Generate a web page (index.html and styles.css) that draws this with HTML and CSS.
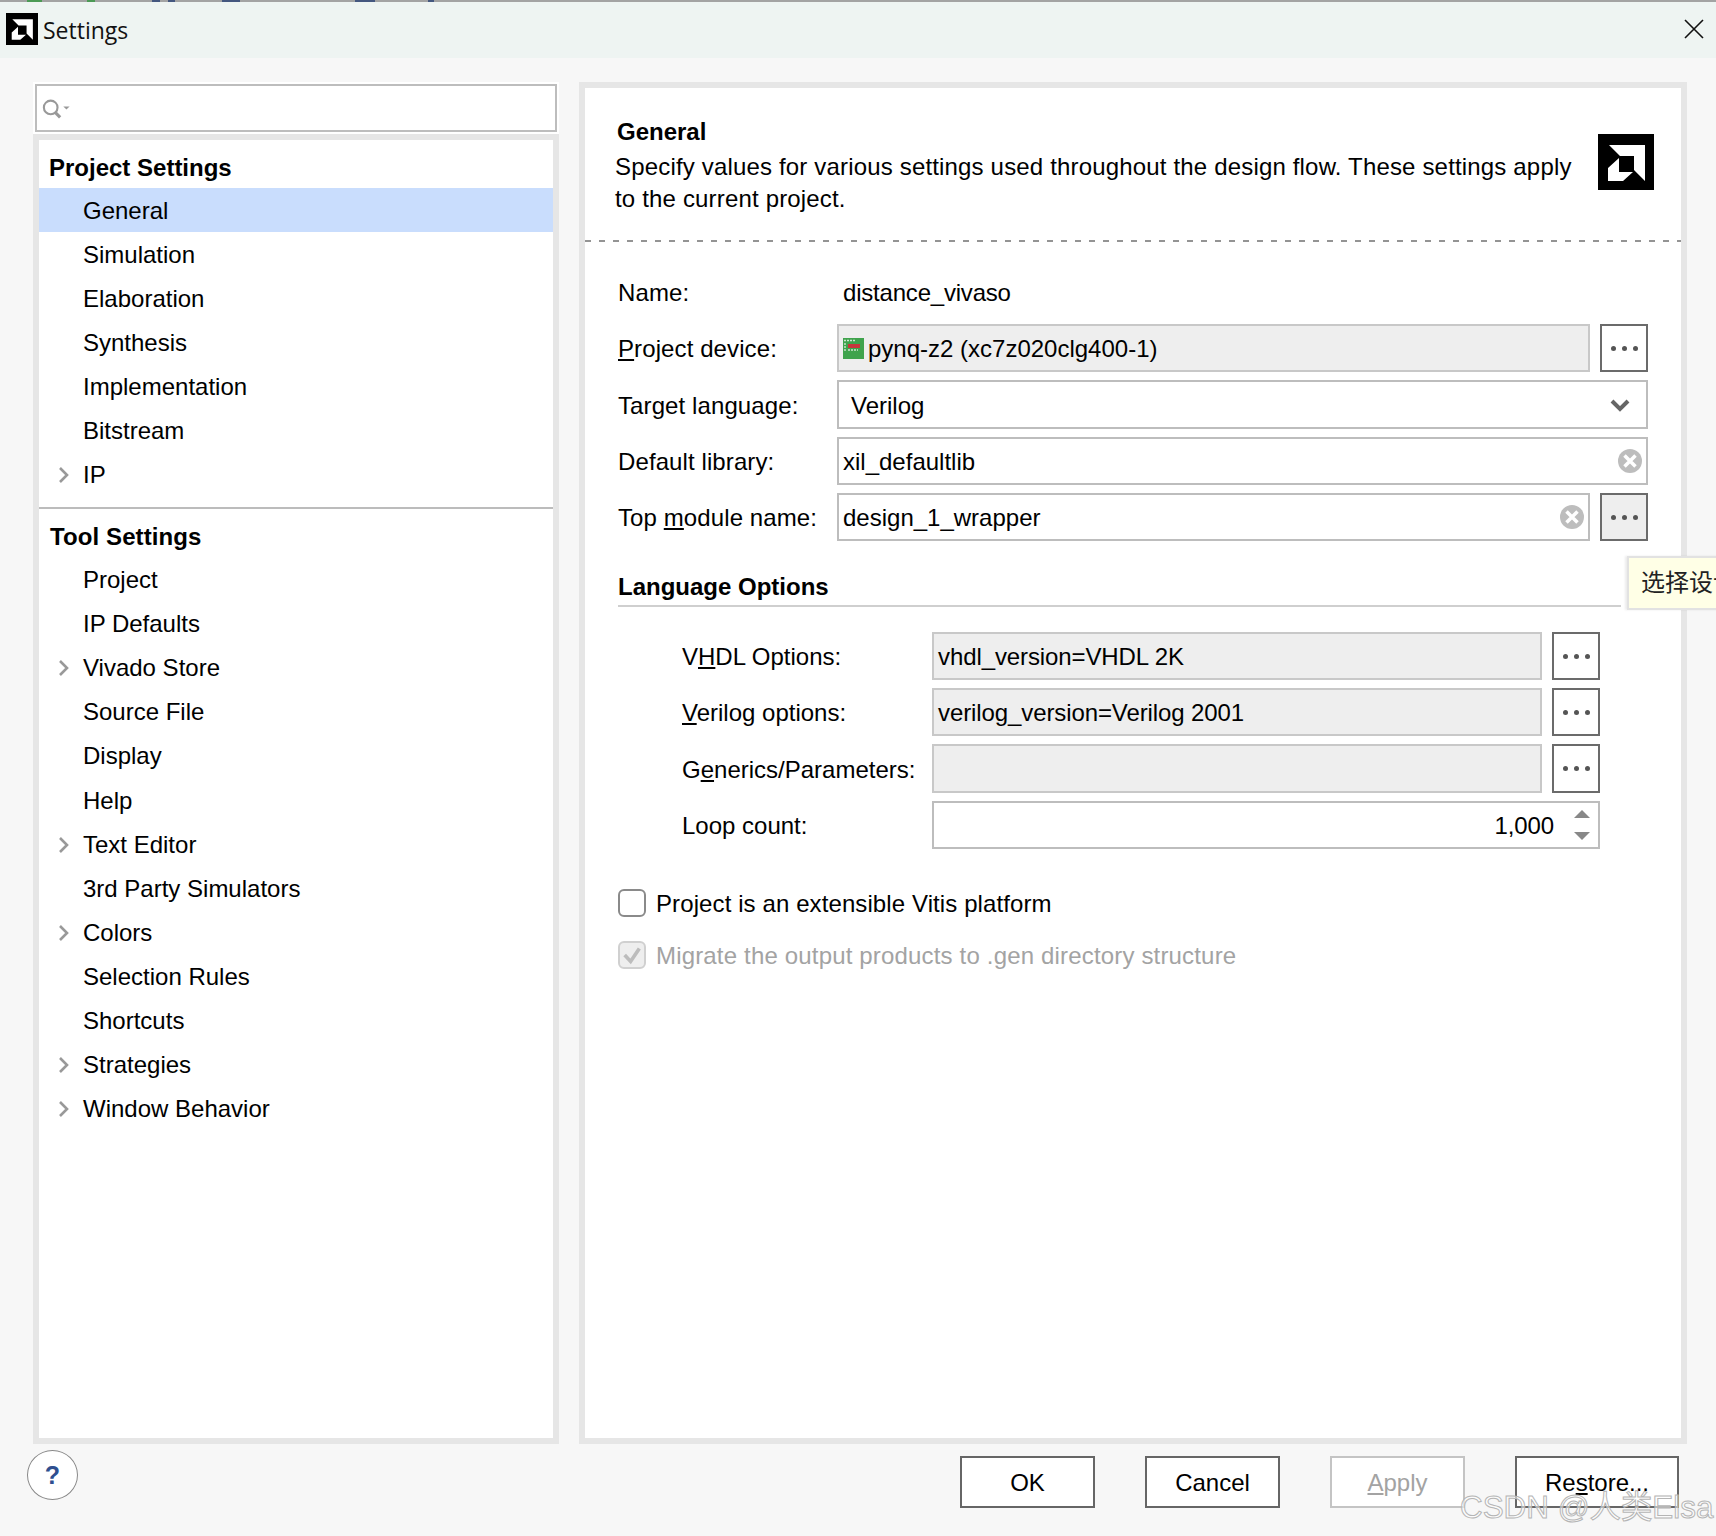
FILE: index.html
```html
<!DOCTYPE html>
<html lang="en">
<head>
<meta charset="utf-8">
<title>Settings</title>
<link rel="stylesheet" href="styles.css">
</head>
<body>
<div class="app">
  <div class="strip"></div>
  <header class="titlebar">
    <svg class="logo-small" viewBox="0 0 56 56"><rect width="56" height="56" fill="#000"/><path fill="#fff" d="M11 11H47V47L36 36V22H22Z M21 24V38H35L25 47H10V34Z"/></svg>
    <span class="window-title">Settings</span>
    <svg class="close" viewBox="0 0 20 20"><path d="M1 1L19 19M19 1L1 19" stroke="#111" stroke-width="1.6" fill="none"/></svg>
  </header>

  <main class="content">
    <aside class="sidebar">
      <div class="search-wrap">
        <div class="search">
          <svg class="search-icon" viewBox="0 0 28 20"><circle cx="8" cy="9" r="6.500" fill="none" stroke="#999" stroke-width="2"/><path d="M12.500 14L17 18.500" stroke="#999" stroke-width="3"/><path d="M20 8h6l-3 3z" fill="#999"/></svg>
        </div>
      </div>
      <nav class="tree">
        <div class="group-title">Project Settings</div>
        <div class="item selected">General</div>
        <div class="item">Simulation</div>
        <div class="item">Elaboration</div>
        <div class="item">Synthesis</div>
        <div class="item">Implementation</div>
        <div class="item">Bitstream</div>
        <div class="item"><svg class="chev" viewBox="0 0 10 16"><path d="M1 1L8 8L1 15" fill="none" stroke="#999" stroke-width="2.600"/></svg>IP</div>
        <div class="tree-rule"></div>
        <div class="group-title tool-title">Tool Settings</div>
        <div class="tool-list">
          <div class="item">Project</div>
          <div class="item">IP Defaults</div>
          <div class="item"><svg class="chev" viewBox="0 0 10 16"><path d="M1 1L8 8L1 15" fill="none" stroke="#999" stroke-width="2.600"/></svg>Vivado Store</div>
          <div class="item">Source File</div>
          <div class="item">Display</div>
          <div class="item">Help</div>
          <div class="item"><svg class="chev" viewBox="0 0 10 16"><path d="M1 1L8 8L1 15" fill="none" stroke="#999" stroke-width="2.600"/></svg>Text Editor</div>
          <div class="item">3rd Party Simulators</div>
          <div class="item"><svg class="chev" viewBox="0 0 10 16"><path d="M1 1L8 8L1 15" fill="none" stroke="#999" stroke-width="2.600"/></svg>Colors</div>
          <div class="item">Selection Rules</div>
          <div class="item">Shortcuts</div>
          <div class="item"><svg class="chev" viewBox="0 0 10 16"><path d="M1 1L8 8L1 15" fill="none" stroke="#999" stroke-width="2.600"/></svg>Strategies</div>
          <div class="item"><svg class="chev" viewBox="0 0 10 16"><path d="M1 1L8 8L1 15" fill="none" stroke="#999" stroke-width="2.600"/></svg>Window Behavior</div>
        </div>
      </nav>
    </aside>

    <section class="panel">
      <div class="panel-head">
        <div class="head-text">
          <div class="head-title">General</div>
          <p class="head-desc">Specify values for various settings used throughout the design flow. These settings apply to the current project.</p>
        </div>
        <svg class="logo-large" viewBox="0 0 56 56"><rect width="56" height="56" fill="#000"/><path fill="#fff" d="M11 11H47V47L36 36V22H22Z M21 24V38H35L25 47H10V34Z"/></svg>
      </div>
      <div class="dashed"></div>

      <div class="form">
        <div class="row">
          <span class="label">Name:</span>
          <span class="plain-value">distance_vivaso</span>
        </div>
        <div class="row">
          <span class="label"><u>P</u>roject device:</span>
          <div class="field readonly">
            <svg class="chip" viewBox="0 0 21 21"><rect width="21" height="21" fill="#3fa34d"/><rect x="5" y="6" width="12" height="4" fill="#c9363c"/><path d="M1 2.500h11M2 5v9M5 12h10" stroke="#cfe3cf" stroke-width="1.400" stroke-dasharray="2 1" fill="none"/></svg>
            <span class="val">pynq-z2 (xc7z020clg400-1)</span>
          </div>
          <button class="more"><i></i><i></i><i></i></button>
        </div>
        <div class="row tall">
          <span class="label">Target language:</span>
          <div class="field select">
            <span class="val">Verilog</span>
            <svg class="caret" viewBox="0 0 20 13"><path d="M2 2L10 10L18 2" fill="none" stroke="#666" stroke-width="4"/></svg>
          </div>
        </div>
        <div class="row">
          <span class="label">Default library:</span>
          <div class="field">
            <span class="val">xil_defaultlib</span>
            <svg class="clear" viewBox="0 0 24 24"><circle cx="12" cy="12" r="12" fill="#bdbdbd"/><path d="M6.500 6.500L17.500 17.500M17.500 6.500L6.500 17.500" stroke="#fff" stroke-width="3.500"/></svg>
          </div>
        </div>
        <div class="row">
          <span class="label">Top <u>m</u>odule name:</span>
          <div class="field">
            <span class="val">design_1_wrapper</span>
            <svg class="clear" viewBox="0 0 24 24"><circle cx="12" cy="12" r="12" fill="#bdbdbd"/><path d="M6.500 6.500L17.500 17.500M17.500 6.500L6.500 17.500" stroke="#fff" stroke-width="3.500"/></svg>
          </div>
          <button class="more hover"><i></i><i></i><i></i></button>
        </div>
      </div>

      <h3 class="section-title">Language Options</h3>

      <div class="lang">
        <div class="row">
          <span class="label wide">V<u>H</u>DL Options:</span>
          <div class="field readonly"><span class="val tight">vhdl_version=VHDL 2K</span></div>
          <button class="more"><i></i><i></i><i></i></button>
        </div>
        <div class="row">
          <span class="label wide"><u>V</u>erilog options:</span>
          <div class="field readonly"><span class="val tight">verilog_version=Verilog 2001</span></div>
          <button class="more"><i></i><i></i><i></i></button>
        </div>
        <div class="row tall">
          <span class="label wide">G<u>e</u>nerics/Parameters:</span>
          <div class="field readonly"></div>
          <button class="more"><i></i><i></i><i></i></button>
        </div>
        <div class="row">
          <span class="label wide">Loop count:</span>
          <div class="field spinner">
            <span class="val tight">1,000</span>
            <div class="spin">
              <svg viewBox="0 0 16 8"><path d="M0 8L8 0L16 8Z" fill="#888"/></svg>
              <svg viewBox="0 0 16 8"><path d="M0 0L8 8L16 0Z" fill="#888"/></svg>
            </div>
          </div>
        </div>
      </div>

      <div class="checks">
        <div class="check-row">
          <span class="box"></span>
          <span class="val">Project is an extensible Vitis platform</span>
        </div>
        <div class="check-row disabled">
          <span class="box checked"><svg viewBox="0 0 24 24"><path d="M4 12L10.500 19L20 5" fill="none" stroke="#bcbcbc" stroke-width="4"/></svg></span>
          <span class="val">Migrate the output products to .gen directory structure</span>
        </div>
      </div>

      <div class="tooltip">选择设计</div>
    </section>
  </main>

  <footer class="footer">
    <button class="help">?</button>
    <div class="actions">
      <button class="btn">OK</button>
      <button class="btn">Cancel</button>
      <button class="btn apply"><u>A</u>pply</button>
      <button class="btn restore">Re<u>s</u>tore...</button>
    </div>
  </footer>
  <div class="watermark">CSDN @人类Elsa</div>
</div>
</body>
</html>
```

FILE: styles.css
```css
* { box-sizing: border-box; }
html, body { margin: 0; padding: 0; }
body { font-family: "Liberation Sans", Arial, "Noto Sans CJK SC", sans-serif; font-size: 24px; color: #000; background: #f7f7f7; }

.app { position: relative; width: 1716px; height: 1536px; overflow: hidden; display: flex; flex-direction: column; background: #f7f7f7; }

.strip {
  height: 2px; flex: none;
  background:
    linear-gradient(90deg, transparent 27px, #4c9a55 27px, #4c9a55 42px, transparent 42px, transparent 87px, #4c9a55 87px, #4c9a55 95px, transparent 95px,
      transparent 152px, #44577f 152px, #44577f 160px, transparent 160px, transparent 168px, #44577f 168px, #44577f 175px, transparent 175px,
      transparent 222px, #44577f 222px, #44577f 240px, transparent 240px, transparent 355px, #44577f 355px, #44577f 375px, transparent 375px, transparent 428px, #44577f 428px, #44577f 434px, transparent 434px),
    #a3a3a3;
}

.titlebar { height: 56px; flex: none; display: flex; align-items: center; background: #eef4f2; padding: 0 12px 0 6px; }
.logo-small { width: 32px; height: 32px; flex: none; margin-top: -2px; }
.window-title { font-family: "Open Sans", sans-serif; font-size: 23px; margin-left: 5px; color: #111; }
.close { width: 20px; height: 20px; margin-left: auto; margin-top: -2px; }

.content { height: 1386px; flex: none; display: flex; gap: 20px; padding: 24px 29px 0 33px; }

.sidebar { width: 526px; flex: none; display: flex; flex-direction: column; }
.search-wrap { height: 52px; flex: none; padding: 2px; background: #fff; }
.search { height: 48px; border: 2px solid #bdbdbd; background: #fff; display: flex; align-items: center; padding-left: 5px; }
.search-icon { width: 30px; height: 21px; }

.tree { flex: 1; border: 6px solid #e6e6e6; background: #fff; padding-top: 4px; }
.group-title { height: 44px; line-height: 44px; padding-top: 2px; font-weight: 700; padding-left: 10px; }
.tool-title { padding-left: 11px; letter-spacing: .1px; }
.item { position: relative; height: 44px; padding: 2px 0 0 44px; display: flex; align-items: center; }
.tool-list .item { height: 44.1px; }
.item.selected { background: #c9ddfd; }
.chev { position: absolute; left: 20px; top: 15px; width: 10px; height: 16px; }
.tree-rule { height: 2px; background: #bcbcbc; margin: 11px 0 4px; }

.panel { position: relative; width: 1108px; flex: none; border: 6px solid #e6e6e6; background: #fff; }
.panel-head { height: 152px; display: flex; padding: 26px 26px 0 30px; }
.head-text { width: 984px; flex: none; }
.head-title { font-weight: 700; height: 36px; line-height: 36px; padding-left: 2px; }
.head-desc { margin: 0; padding-top: 1px; line-height: 32px; width: 965px; letter-spacing: .17px; }
.logo-large { width: 56px; height: 56px; flex: none; margin: 20px 0 0 -1px; }
.dashed { height: 2px; background: repeating-linear-gradient(90deg, #949494 0, #949494 6px, transparent 6px, transparent 14px); }

.form { padding: 26px 33px 0 33px; display: flex; flex-direction: column; gap: 8px; }
.row { display: flex; height: 48px; align-items: center; }
.row.tall { height: 49px; }
.label { width: 219px; flex: none; white-space: nowrap; padding-top: 2px; letter-spacing: .1px; }
.label.wide { width: 250px; letter-spacing: 0; }
.plain-value { padding: 2px 0 0 6px; letter-spacing: -.2px; }
.val { padding-top: 2px; }
.val.tight { letter-spacing: -.1px; }

.field { flex: 1; height: 100%; min-width: 0; display: flex; align-items: center; border: 2px solid #bdbdbd; background: #fff; padding: 0 4px; }
.field.readonly { background: #eee; border-color: #c8c8c8; }
.field.select { padding: 0 16px 0 12px; justify-content: space-between; }
.field.spinner { justify-content: flex-end; padding-right: 8px; }
.clear { width: 24px; height: 24px; margin-left: auto; flex: none; }
.chip { width: 21px; height: 21px; flex: none; margin-right: 4px; }
.caret { width: 20px; height: 13px; margin-top: 2px; }
.spin { display: flex; flex-direction: column; gap: 14px; margin-left: 20px; width: 16px; }
.spin svg { width: 16px; height: 8px; display: block; }

.more { width: 48px; height: 48px; flex: none; margin-left: 10px; padding: 0; border: 2px solid #6b6b6b; background: #fff; display: flex; align-items: center; justify-content: center; gap: 6px; }
.more.hover { background: #eee; }
.more i { width: 5px; height: 5px; border-radius: 50%; background: #555; display: block; }
.row.tall .more { height: 49px; }

.section-title { margin: 28px 60px 0 33px; height: 38px; line-height: 36px; font-size: 24px; font-weight: 700; border-bottom: 2px solid #cfcfcf; }

.lang { padding: 25px 81px 0 97px; display: flex; flex-direction: column; gap: 8px; }

.checks { padding: 40px 0 0 33px; display: flex; flex-direction: column; gap: 24px; }
.check-row { display: flex; align-items: center; height: 28px; gap: 10px; letter-spacing: .1px; }
.box { width: 28px; height: 28px; flex: none; border: 2px solid #8a8a8a; border-radius: 6px; background: #fff; }
.box.checked { border-color: #d0d0d0; background: #eee; display: flex; align-items: center; justify-content: center; }
.box svg { width: 22px; height: 22px; }
.disabled { color: #a3a3a3; letter-spacing: .17px; }

.tooltip { position: absolute; left: 1042px; top: 468px; width: 120px; height: 54px; line-height: 46px; padding-left: 12px; background: #ffffe6; border: 2px solid #e2e2e2; box-shadow: -2px 0 2px rgba(0,0,0,.08); font-family: "Noto Sans CJK SC", sans-serif; font-size: 24px; white-space: nowrap; overflow: hidden; color: #222; }

.footer { flex: 1; display: flex; justify-content: space-between; align-items: flex-start; padding: 6px 37px 0 27px; }
.help { width: 51px; height: 50px; padding: 0; border: 1px solid #888; border-radius: 50%; background: #fff; color: #2f4f8f; font-family: "Liberation Sans", sans-serif; font-size: 25px; font-weight: 700; }
.actions { display: flex; gap: 50px; margin-top: 6px; }
.btn { height: 52px; padding: 2px 0 0; border: 2px solid #666; background: #fff; font-family: "Liberation Sans", sans-serif; font-size: 24px; color: #000; width: 135px; }
.btn.apply { border-color: #c4c4c4; color: #a3a3a3; }
.btn.restore { width: 164px; }

.watermark { position: absolute; left: 1460px; top: 1486px; font-size: 31.400px; line-height: 44px; color: rgba(255,255,255,.55); -webkit-text-stroke: 1px #b5b5b5; white-space: nowrap; font-family: "Liberation Sans", "Noto Sans CJK SC", sans-serif; }
```
